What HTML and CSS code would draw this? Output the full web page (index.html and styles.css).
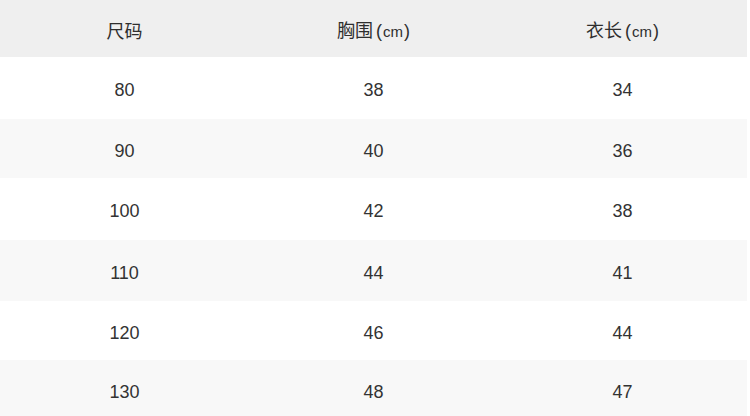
FILE: index.html
```html
<!DOCTYPE html>
<html lang="zh-CN">
<head>
<meta charset="utf-8">
<title>尺码表</title>
<link rel="stylesheet" href="styles.css">
</head>
<body>
<div class="size-table">
  <div class="row head">
    <div class="cell">尺码</div>
    <div class="cell">胸围<span class="unit">(<span class="cm">cm</span>)</span></div>
    <div class="cell">衣长<span class="unit">(<span class="cm">cm</span>)</span></div>
  </div>
  <div class="row r1">
    <div class="cell">80</div><div class="cell">38</div><div class="cell">34</div>
  </div>
  <div class="row r2 alt">
    <div class="cell">90</div><div class="cell">40</div><div class="cell">36</div>
  </div>
  <div class="row r3">
    <div class="cell">100</div><div class="cell">42</div><div class="cell">38</div>
  </div>
  <div class="row r4 alt">
    <div class="cell">110</div><div class="cell">44</div><div class="cell">41</div>
  </div>
  <div class="row r5">
    <div class="cell">120</div><div class="cell">46</div><div class="cell">44</div>
  </div>
  <div class="row r6 alt">
    <div class="cell">130</div><div class="cell">48</div><div class="cell">47</div>
  </div>
</div>
</body>
</html>
```

FILE: styles.css
```css
html, body {
  margin: 0;
  padding: 0;
  background: #ffffff;
}
body {
  width: 750px;
  height: 416px;
  overflow: hidden;
  font-family: "Liberation Sans", Arial, "Noto Sans CJK SC", sans-serif;
  color: #333333;
}
.size-table {
  width: 747px;
  display: flex;
  flex-direction: column;
}
.row {
  display: grid;
  grid-template-columns: 249px 249px 249px;
  align-items: center;
  flex-shrink: 0;
}
.cell {
  text-align: center;
  font-size: 18px;
  line-height: 20px;
  padding-top: 4px;
}
.head {
  height: 57px;
  background: #efefef;
}
.head .cell {
  font-family: "Noto Sans CJK SC", sans-serif;
  font-size: 18px;
  padding-top: 3px;
  color: #2e2e2e;
}
.unit {
  font-family: "Liberation Sans", Arial, sans-serif;
  margin-left: 3px;
  font-size: 18px;
}
.cm {
  font-size: 15px;
  margin: 0 1px;
}
.r1 { height: 62px; }
.r2 { height: 59px; }
.r3 { height: 62px; }
.r4 { height: 61px; }
.r5 { height: 59px; }
.r6 { height: 60px; }
.alt {
  background: #f8f8f8;
}
```
